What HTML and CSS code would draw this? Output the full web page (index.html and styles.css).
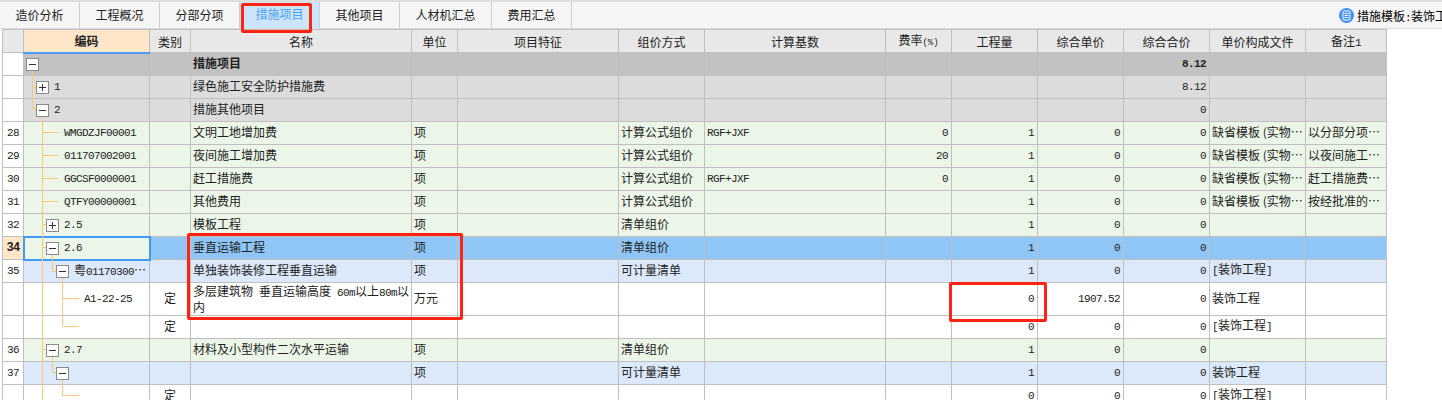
FILE: index.html
```html
<!DOCTYPE html>
<html lang="zh-CN">
<head>
  <meta charset="UTF-8" />
  <title>措施项目</title>
  <link rel="stylesheet" href="styles.css">
</head>
<body>

<div class="page">
  <nav class="tabbar">
    <a class="tab">造价分析</a>
    <a class="tab">工程概况</a>
    <a class="tab">分部分项</a>
    <a class="tab active">措施项目</a>
    <a class="tab">其他项目</a>
    <a class="tab wide">人材机汇总</a>
    <a class="tab">费用汇总</a>
    <div class="template">
      <svg class="template-icon" width="15" height="15" viewBox="0 0 15 15">
        <circle cx="7.5" cy="7.5" r="7.5" fill="#3f8ff5"/>
        <rect x="4" y="3" width="7" height="9" rx="1" fill="none" stroke="#fff"/>
        <path d="M5.5 5.5h4M5.5 7.5h4M5.5 9.5h4" stroke="#fff"/>
      </svg>
      <span>措施模板<span class="m">:</span>装饰工程</span>
    </div>
  </nav>

  <table class="grid">
    <colgroup>
      <col class="w-no"><col class="w-code"><col class="w-type"><col class="w-name"><col class="w-unit">
      <col class="w-feat"><col class="w-way"><col class="w-base"><col class="w-rate"><col class="w-qty">
      <col class="w-price"><col class="w-total"><col class="w-file"><col class="w-note">
    </colgroup>
    <thead>
      <tr>
        <th></th><th class="code-head">编码</th><th>类别</th><th>名称</th><th>单位</th>
        <th>项目特征</th><th>组价方式</th><th>计算基数</th><th>费率<span class="pct">(%)</span></th><th>工程量</th>
        <th>综合单价</th><th>综合合价</th><th>单价构成文件</th><th>备注<span class="m">1</span></th>
      </tr>
    </thead>
    <tbody>
      <tr class="group">
        <td class="no"></td><td><div class="tree d0"><i class="toggle"></i></div></td><td></td><td class="strong">措施项目</td><td></td>
        <td></td><td></td><td></td><td></td><td></td><td></td><td class="num strong">8.12</td><td></td><td></td>
      </tr>
      <tr class="sub">
        <td class="no"></td><td><div class="tree d1"><i class="toggle plus"></i><span class="m">1</span></div></td><td></td><td>绿色施工安全防护措施费</td><td></td>
        <td></td><td></td><td></td><td></td><td></td><td></td><td class="num">8.12</td><td></td><td></td>
      </tr>
      <tr class="sub">
        <td class="no"></td><td><div class="tree d1"><i class="toggle"></i><span class="m">2</span></div></td><td></td><td>措施其他项目</td><td></td>
        <td></td><td></td><td></td><td></td><td></td><td></td><td class="num">0</td><td></td><td></td>
      </tr>
      <tr class="green">
        <td class="no m">28</td><td><div class="tree leaf1 m">WMGDZJF00001</div></td><td></td><td>文明工地增加费</td><td>项</td>
        <td></td><td>计算公式组价</td><td class="m">RGF+JXF</td><td class="num">0</td><td class="num">1</td><td class="num">0</td><td class="num">0</td><td>缺省模板 (实物…</td><td>以分部分项…</td>
      </tr>
      <tr class="green">
        <td class="no m">29</td><td><div class="tree leaf1 m">011707002001</div></td><td></td><td>夜间施工增加费</td><td>项</td>
        <td></td><td>计算公式组价</td><td></td><td class="num">20</td><td class="num">1</td><td class="num">0</td><td class="num">0</td><td>缺省模板 (实物…</td><td>以夜间施工…</td>
      </tr>
      <tr class="green">
        <td class="no m">30</td><td><div class="tree leaf1 m">GGCSF0000001</div></td><td></td><td>赶工措施费</td><td>项</td>
        <td></td><td>计算公式组价</td><td class="m">RGF+JXF</td><td class="num">0</td><td class="num">1</td><td class="num">0</td><td class="num">0</td><td>缺省模板 (实物…</td><td>赶工措施费…</td>
      </tr>
      <tr class="green">
        <td class="no m">31</td><td><div class="tree leaf1 m">QTFY00000001</div></td><td></td><td>其他费用</td><td>项</td>
        <td></td><td>计算公式组价</td><td></td><td></td><td class="num">1</td><td class="num">0</td><td class="num">0</td><td>缺省模板 (实物…</td><td>按经批准的…</td>
      </tr>
      <tr class="green">
        <td class="no m">32</td><td><div class="tree d2"><i class="toggle plus"></i><span class="m">2.5</span></div></td><td></td><td>模板工程</td><td>项</td>
        <td></td><td>清单组价</td><td></td><td></td><td class="num">1</td><td class="num">0</td><td class="num">0</td><td></td><td></td>
      </tr>
      <tr class="current">
        <td class="no m on">34</td><td class="picked"><div class="tree d2"><i class="toggle"></i><span class="m">2.6</span></div></td><td></td><td>垂直运输工程</td><td>项</td>
        <td></td><td>清单组价</td><td></td><td></td><td class="num">1</td><td class="num">0</td><td class="num">0</td><td></td><td></td>
      </tr>
      <tr class="blue">
        <td class="no m">35</td><td><div class="tree d3"><i class="toggle"></i><span>粤<span class="m">01170300</span>…</span></div></td><td></td><td>单独装饰装修工程垂直运输</td><td>项</td>
        <td></td><td>可计量清单</td><td></td><td></td><td class="num">1</td><td class="num">0</td><td class="num">0</td><td><span class="m">[</span>装饰工程<span class="m">]</span></td><td></td>
      </tr>
      <tr class="tall">
        <td class="no"></td><td><div class="tree leaf2 m">A1-22-25</div></td><td class="center">定</td>
        <td class="wrap">多层建筑物<span class="m"> </span>垂直运输高度<span class="m"> </span><span class="m">60m</span>以上<span class="m">80m</span>以内</td><td>万元</td>
        <td></td><td></td><td></td><td></td><td class="num">0</td><td class="num">1907.52</td><td class="num">0</td><td>装饰工程</td><td></td>
      </tr>
      <tr>
        <td class="no"></td><td></td><td class="center">定</td><td></td><td></td>
        <td></td><td></td><td></td><td></td><td class="num">0</td><td class="num">0</td><td class="num">0</td><td><span class="m">[</span>装饰工程<span class="m">]</span></td><td></td>
      </tr>
      <tr class="green">
        <td class="no m">36</td><td><div class="tree d2"><i class="toggle"></i><span class="m">2.7</span></div></td><td></td><td>材料及小型构件二次水平运输</td><td>项</td>
        <td></td><td>清单组价</td><td></td><td></td><td class="num">1</td><td class="num">0</td><td class="num">0</td><td></td><td></td>
      </tr>
      <tr class="blue">
        <td class="no m">37</td><td><div class="tree d3"><i class="toggle"></i></div></td><td></td><td></td><td>项</td>
        <td></td><td>可计量清单</td><td></td><td></td><td class="num">1</td><td class="num">0</td><td class="num">0</td><td>装饰工程</td><td></td>
      </tr>
      <tr>
        <td class="no"></td><td></td><td class="center">定</td><td></td><td></td>
        <td></td><td></td><td></td><td></td><td class="num">0</td><td class="num">0</td><td class="num">0</td><td><span class="m">[</span>装饰工程<span class="m">]</span></td><td></td>
      </tr>
    </tbody>
  </table>

  <!-- tree guide lines, they run across the rows of the code column -->
  <svg class="guides" width="90" height="400" viewBox="0 0 90 400">
    <path d="M32.5 69V109.5H36M32.5 87.5H36M42.5 116V400M42.5 132.5H58M42.5 155.5H58M42.5 178.5H58M42.5 201.5H58M42.5 224.5H46M42.5 247.5H46M42.5 349.5H46M52.5 254V271.5H56M62.5 277V326.5H79M62.5 298.5H79M52.5 356V372.5H56M62.5 378V395.5H79" fill="none" stroke="#fdc678"/>
  </svg>

  <div class="mark mark-tab"></div>
  <div class="mark mark-name"></div>
  <div class="mark mark-qty"></div>
</div>

</body>
</html>
```

FILE: styles.css
```css
html, body {
  margin: 0;
  height: 400px;
  overflow: hidden;
  background: #fff;
}

body {
  font-family: "Noto Sans CJK SC", sans-serif;
  font-size: 12px;
  color: #222;
}

.page {
  position: relative;
  height: 400px;
  overflow: hidden;
}

.m {
  font-family: "Liberation Mono", monospace;
  font-size: 11px;
  letter-spacing: -0.6px;
}

/* tab bar */
.tabbar {
  display: flex;
  box-sizing: border-box;
  height: 29px;
  background-color: #f5f5f5;
  border-top: 2px solid #dedede;
  border-bottom: 1px solid #dcdcdc;
}

.tab {
  box-sizing: border-box;
  width: 80px;
  line-height: 26px;
  text-align: center;
  border-right: 1px solid #cfcfcf;
}

.tab.wide {
  width: 92px;
}

.tab.active {
  background-color: #cde5fb;
  color: #4a9ff5;
  line-height: 24px;
}

.template {
  display: flex;
  align-items: center;
  gap: 3px;
  width: 103px;
  margin-left: auto;
  overflow: hidden;
  white-space: nowrap;
  color: #000;
}

.template-icon {
  flex: none;
}

/* grid */
.grid {
  table-layout: fixed;
  border-collapse: collapse;
  width: 1384px;
  margin-left: 2px;
}

.w-no { width: 21px; }
.w-code { width: 126px; }
.w-type { width: 41px; }
.w-name { width: 221px; }
.w-unit { width: 46px; }
.w-feat { width: 161px; }
.w-way { width: 86px; }
.w-base { width: 181px; }
.w-rate { width: 66px; }
.w-qty { width: 86px; }
.w-price { width: 86px; }
.w-total { width: 86px; }
.w-file { width: 96px; }
.w-note { width: 81px; }

.grid tr {
  height: 23px;
}

.grid th,
.grid td {
  border: 1px solid #bfbfbf;
  padding: 0 2px;
  line-height: 14px;
  white-space: nowrap;
  overflow: hidden;
}

/* the CJK text sits a pixel above the middle of the row */
.grid td {
  padding-bottom: 2px;
}

.grid th {
  background-color: #e8e8e8;
  font-weight: normal;
  padding-top: 1px;
}

.grid th.code-head {
  background-color: #ffe6c9;
  border-bottom: 2px solid #4a9bf5;
  font-weight: bold;
}

.pct {
  font-family: "Liberation Mono", monospace;
  font-size: 9px;
}

.group td { background-color: #c2c2c2; }
.sub td { background-color: #dcdcdc; }
.green td { background-color: #ecf6e8; }
.blue td { background-color: #dce9fb; }
.current td { background-color: #90c6f6; }

.grid td.no {
  background-color: #fff;
  text-align: center;
  padding: 0;
}

.grid td.no.on {
  background-color: #ffe6c9;
  font-weight: bold;
  font-size: 12px;
}

.grid td.picked {
  background-color: #ecf6e8;
  outline: 2px solid #3f9bf5;
  outline-offset: -1px;
}

.strong {
  font-weight: bold;
}

.grid td.num {
  font-family: "Liberation Mono", monospace;
  font-size: 11px;
  letter-spacing: -0.6px;
  text-align: right;
  padding: 0 3px 0 2px;
}

.grid td.m {
  padding-bottom: 0;
}

.grid td.center {
  text-align: center;
}

.grid tr.tall {
  height: 33px;
}

.grid td.wrap {
  white-space: normal;
  padding: 0 0 0 2px;
}

/* tree column */
.tree {
  display: flex;
  align-items: center;
  gap: 5px;
  height: 20px;
  margin-bottom: -2px;
}

.d0 { padding-left: 0; }
.d1 { padding-left: 10px; }
.d2 { padding-left: 20px; }
.d3 { padding-left: 30px; }
.leaf1 { padding-left: 38px; }
.leaf2 { padding-left: 58px; }

.toggle {
  position: relative;
  z-index: 2;
  flex: none;
  box-sizing: border-box;
  width: 13px;
  height: 13px;
  border: 1px solid #8a8a8a;
  background: linear-gradient(#333, #333) center / 7px 1px no-repeat, #fff;
}

.toggle.plus {
  background: linear-gradient(#333, #333) center / 7px 1px no-repeat,
    linear-gradient(#333, #333) center / 1px 7px no-repeat, #fff;
}

.guides {
  position: absolute;
  top: 0;
  left: 0;
  z-index: 1;
}

/* red hand-drawn frames */
.mark {
  position: absolute;
  z-index: 3;
  box-sizing: border-box;
  border: 3px solid #ff2314;
  border-radius: 2px;
}

.mark-tab {
  left: 241px;
  top: 3px;
  width: 71px;
  height: 30px;
}

.mark-name {
  left: 187px;
  top: 233px;
  width: 276px;
  height: 87px;
}

.mark-qty {
  left: 949px;
  top: 282px;
  width: 98px;
  height: 40px;
}
```
